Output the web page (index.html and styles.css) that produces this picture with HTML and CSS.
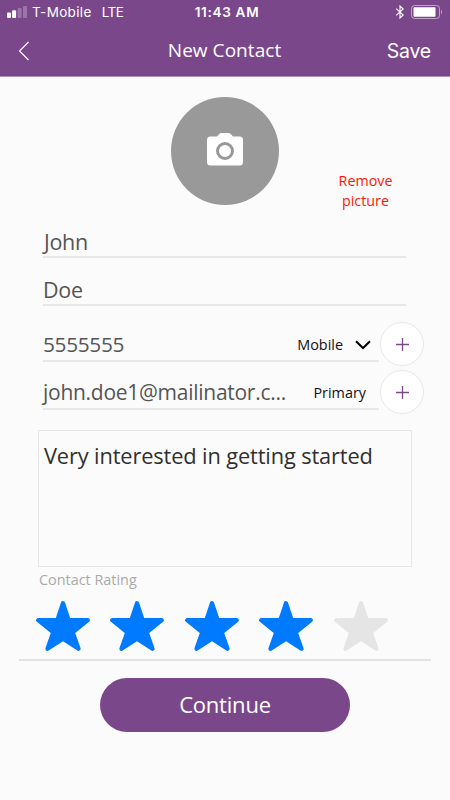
FILE: index.html
```html
<!DOCTYPE html>
<html lang="en">
<head>
<meta charset="utf-8">
<title>New Contact</title>
<link rel="stylesheet" href="styles.css">
</head>
<body>
<svg class="defs" width="0" height="0"><symbol id="star" viewBox="0 0 54 50"><path d="M27 2.200 32.700 19.200H51.800L36.700 31.300 42.500 47.800 27 37.700 11.500 47.800 17.300 31.300 2.200 19.200H21.300Z" fill="currentColor" stroke="currentColor" stroke-width="4.200" stroke-linejoin="round"/></symbol></svg>
<header class="header">
  <div class="status">
    <div class="carrier">
      <svg width="20" height="12" viewBox="0 0 20 12" fill="#fff"><rect y="6.500" width="4" height="5.500" rx="1"/><rect x="5.100" y="4.300" width="4" height="7.700" rx="1"/><rect x="10.600" y="2" width="4" height="10" rx="1" opacity=".25"/><rect x="16" width="4" height="12" rx="1" opacity=".25"/></svg>
      <span class="network">T-Mobile</span><span class="lte">LTE</span>
    </div>
    <div class="time">11:43 AM</div>
    <div class="power">
      <svg width="10" height="14" viewBox="0 0 10 14" fill="none" stroke="#fff" stroke-width="1.100"><path d="M1.200 3.700 8.200 10 5 13V1L8.200 4 1.200 10.300"/></svg>
      <svg width="32" height="14" viewBox="0 0 32 14"><rect x=".5" y=".5" width="28" height="13" rx="3" fill="none" stroke="#fff" stroke-opacity=".5"/><rect x="2.500" y="2.300" width="22" height="9.500" rx="1" fill="#fff"/><path d="M30 4.500q2 2.500 0 5z" fill="#fff" opacity=".5"/></svg>
    </div>
  </div>
  <nav class="nav">
    <svg class="back" width="12" height="20" viewBox="0 0 12 20" fill="none" stroke="#fff" stroke-width="1.100"><path d="M10.500 1 1.500 10 10.500 19"/></svg>
    <h1 class="title">New Contact</h1>
    <span class="save">Save</span>
  </nav>
</header>
<main>
  <section class="photo">
    <div class="avatar"><svg width="36" height="33" viewBox="0 0 36 33"><path d="M3.500 3.500H10L12.500 .8Q13.300 0 14.500 0H21.500Q22.700 0 23.500 .8L26 3.500H32.500Q36 3.500 36 7V29Q36 32.500 32.500 32.500H3.500Q0 32.500 0 29V7Q0 3.500 3.500 3.500Z" fill="#fff"/><circle cx="18" cy="18" r="7.500" fill="#fff" stroke="#999" stroke-width="3"/></svg></div>
    <div class="remove">Remove<br>picture</div>
  </section>
  <section class="form">
    <div class="field name"><span class="value first">John</span></div>
    <div class="field name"><span class="value last">Doe</span></div>
    <div class="row phone">
      <div class="field"><span class="value number">5555555</span><span class="kind mobile">Mobile</span><svg class="chevron" width="16" height="10" viewBox="0 0 16 10" fill="none" stroke="#000" stroke-width="2"><path d="M1 1.300 8 8 15 1.300"/></svg></div>
      <div class="add"><svg width="13" height="13" viewBox="0 0 13 13" stroke="#7b478b" stroke-width="1.300"><path d="M6.500 0V13M0 6.500H13"/></svg></div>
    </div>
    <div class="row email">
      <div class="field"><span class="value mail">john.doe1@mailinator.c...</span><span class="kind primary">Primary</span></div>
      <div class="add"><svg width="13" height="13" viewBox="0 0 13 13" stroke="#7b478b" stroke-width="1.300"><path d="M6.500 0V13M0 6.500H13"/></svg></div>
    </div>
    <div class="notes"><span class="note">Very interested in getting started</span></div>
  </section>
  <section class="rating">
    <div class="label"><span>Contact Rating</span></div>
    <div class="stars">
      <svg class="star"><use href="#star"/></svg>
      <svg class="star"><use href="#star"/></svg>
      <svg class="star"><use href="#star"/></svg>
      <svg class="star"><use href="#star"/></svg>
      <svg class="star empty"><use href="#star"/></svg>
    </div>
  </section>
  <div class="continue"><span>Continue</span></div>
</main>
</body>
</html>
```
FILE: styles.css
```css
* { box-sizing: border-box; }
body { margin: 0; width: 450px; height: 800px; overflow: hidden; background: #fbfbfb; font-family: "Open Sans", "Noto Sans", sans-serif; }
svg { display: block; flex: none; }
.defs { position: absolute; }
.header { height: 76px; box-sizing: content-box; background: #7b478b; border-bottom: 1px solid #b08fba; color: #fff; }
.status { height: 25px; padding: 0 7px; display: grid; grid-template-columns: 1fr auto 1fr; align-items: center; font-family: Inter, sans-serif; font-size: 13px; line-height: 25px; }
.carrier { display: flex; align-items: center; }
.carrier svg { margin-top: -1px; }
.network { margin-left: 5px; font-size: 13.5px; letter-spacing: .35px; }
.lte { margin-left: 10px; font-size: 13.5px; letter-spacing: -.5px; }
.time { font-weight: 600; font-size: 13.5px; letter-spacing: .7px; margin-left: 4px; }
.power { display: flex; justify-content: flex-end; align-items: center; gap: 6px; margin-top: -2px; }
.nav { height: 51px; padding: 0 19px 0 18px; display: grid; grid-template-columns: 1fr auto 1fr; align-items: center; }
.title { margin: 0; font-size: 19px; line-height: 30px; font-weight: 400; letter-spacing: .05px; position: relative; top: -1px; }
.save { justify-self: end; font: 400 19.5px/30px Inter, sans-serif; letter-spacing: -.2px; }
.photo { height: 152px; padding-top: 20px; display: grid; grid-template-columns: 171px 108px 171px; }
.avatar { grid-column: 2; width: 108px; height: 108px; border-radius: 50%; background: #999; display: grid; place-items: center; }
.avatar svg { margin-bottom: 3px; }
.remove { justify-self: center; margin: 74px 0 0 2px; color: #ff1700; font-size: 14.3px; line-height: 20px; text-align: center; }
.form { padding-left: 43px; }
.field { display: flex; align-items: center; border-bottom: 2px solid #e7e7e7; white-space: nowrap; }
.field.name { width: 363px; height: 29px; }
.field.name + .field.name { margin-top: 19px; }
.value { color: #555; font-size: 21.5px; font-weight: 400; letter-spacing: -.3px; line-height: 27px; margin-top: -2px; }
.first { margin-left: 1px; }
.number { font-size: 20.8px; letter-spacing: -.3px; margin-top: 0; }
.mail { font-size: 21px; letter-spacing: -.27px; margin-top: 0; }
.row { display: flex; }
.row .field { width: 336px; height: 33px; margin-top: 7px; }
.phone { height: 48px; margin-top: 16px; }
.email { height: 48px; }
.kind { margin-left: auto; color: #111; font-size: 14.4px; line-height: 24px; }
.mobile { margin-right: 12px; }
.chevron { margin-right: 8px; }
.primary { margin-right: 13px; }
.add { width: 44px; height: 44px; margin-left: 1px; border: 1px solid #e8e8e8; border-radius: 50%; background: #fff; display: grid; place-items: center; flex: none; }
.notes { width: 374px; height: 137px; margin: 12px 0 0 -5px; padding: 9px 5px; border: 1px solid #e6e6e6; color: #303030; font-size: 21.8px; font-weight: 400; letter-spacing: -.13px; line-height: 32px; white-space: nowrap; }
.rating { width: 412px; height: 94px; margin-left: 19px; border-bottom: 2px solid #e3e3e3; }
.label { height: 34px; padding-left: 20px; font-size: 14.4px; line-height: 25px; color: #aaa; }
.stars { display: flex; gap: 20.4px; padding-left: 17px; color: #007aff; }
.star { width: 54px; height: 50px; }
.empty { color: #e5e5e5; }
.continue { width: 250px; height: 54px; margin: 17px auto 0; border-radius: 27px; background: #7b478b; color: #fff; font-size: 22px; font-weight: 400; letter-spacing: -.2px; line-height: 53px; text-align: center; }
```
